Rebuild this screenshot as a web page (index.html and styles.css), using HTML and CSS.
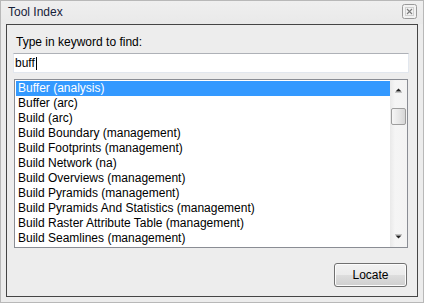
FILE: index.html
```html
<!DOCTYPE html>
<html>
<head>
<meta charset="utf-8">
<title>Tool Index</title>
<link rel="stylesheet" href="styles.css">
</head>
<body>
<div class="window">
  <div class="titlebar">
    <span class="title">Tool Index</span>
    <span class="close">
      <svg width="15" height="15" viewBox="0 0 15 15">
        <rect x="0.5" y="0.5" width="14" height="14" rx="2" fill="#f2f2f2" stroke="#9a9a9a"/>
        <rect x="3.5" y="3.5" width="8" height="8" fill="none" stroke="#d0d0d0"/>
        <path d="M5 5 L10 10 M10 5 L5 10" stroke="#7c7c7c" stroke-width="1.1"/>
      </svg>
    </span>
  </div>
  <div class="panel">
    <div class="prompt">Type in keyword to find:</div>
    <div class="input"><span class="value">buff</span><span class="caret"></span></div>
    <div class="listbox">
      <ul class="items">
        <li class="item selected">Buffer (analysis)</li>
        <li class="item">Buffer (arc)</li>
        <li class="item">Build (arc)</li>
        <li class="item">Build Boundary (management)</li>
        <li class="item">Build Footprints (management)</li>
        <li class="item">Build Network (na)</li>
        <li class="item">Build Overviews (management)</li>
        <li class="item">Build Pyramids (management)</li>
        <li class="item">Build Pyramids And Statistics (management)</li>
        <li class="item">Build Raster Attribute Table (management)</li>
        <li class="item">Build Seamlines (management)</li>
      </ul>
      <div class="scrollbar">
        <div class="arrow up">
          <svg width="17" height="17" viewBox="0 0 17 17"><path d="M5.5 11.5 L11.5 11.5 L8.5 8.5 Z" fill="#222"/><path d="M5 12.5 L12 12.5" stroke="#c4c4c4"/></svg>
        </div>
        <div class="track"><div class="thumb"></div></div>
        <div class="arrow down">
          <svg width="17" height="17" viewBox="0 0 17 17"><path d="M5.5 5.5 L11.5 5.5 L8.5 8.5 Z" fill="#222"/><path d="M5 4.5 L12 4.5" stroke="#c4c4c4"/></svg>
        </div>
      </div>
    </div>
    <div class="actions">
      <button class="locate">Locate</button>
    </div>
  </div>
</div>
</body>
</html>
```
FILE: styles.css
```css
html, body {
  margin: 0;
  padding: 0;
  background: #ececec;
}
.window {
  width: 424px;
  height: 303px;
  box-sizing: border-box;
  border: 1px solid #b8b8b8;
  background: #ececec;
  display: flex;
  flex-direction: column;
  font-family: "Liberation Sans", Arial, sans-serif;
  font-size: 12px;
  color: #000;
}
.titlebar {
  height: 23px;
  flex: none;
  display: flex;
  align-items: center;
  justify-content: space-between;
  padding: 0 6px 0 7px;
  background: linear-gradient(#efefef, #e9e9e9);
}
.title {
  line-height: 23px;
  color: #16213a;
}
.close {
  display: flex;
  margin-top: -2px;
}
.panel {
  flex: 1;
  margin: 0 5px 5px 5px;
  border: 1px solid #454545;
  background: #ededed;
  padding: 10px 9px 0 7px;
  display: flex;
  flex-direction: column;
}
.prompt {
  line-height: 15px;
  padding-left: 2px;
}
.input {
  margin: 3px -1px 0 -1px;
  height: 20px;
  box-sizing: border-box;
  background: #fff;
  border: 1px solid #e2e7ee;
  border-top-color: #aeb1b7;
  display: flex;
  align-items: center;
  padding-left: 1px;
}
.value {
  line-height: 15px;
  margin-top: 1px;
}
.caret {
  width: 1px;
  height: 13px;
  background: #000;
  margin-left: 1px;
  margin-top: 1px;
}
.listbox {
  margin-top: 6px;
  height: 169px;
  box-sizing: border-box;
  border: 1px solid #8a8d94;
  background: #fff;
  display: flex;
}
.items {
  list-style: none;
  margin: 0;
  padding: 1px 0 1px 1px;
  flex: 1;
  overflow: hidden;
}
.item {
  height: 15px;
  line-height: 15px;
  padding-left: 2px;
  white-space: nowrap;
}
.item.selected {
  background: #3399ff;
  color: #fff;
}
.scrollbar {
  width: 17px;
  flex: none;
  display: flex;
  flex-direction: column;
  background: linear-gradient(90deg, #e9e9e9, #f5f5f5 30%, #f3f3f3);
}
.arrow {
  height: 17px;
  display: flex;
}
.track {
  flex: 1;
  padding: 11px 1px 0 1px;
}
.thumb {
  height: 17px;
  box-sizing: border-box;
  border: 1px solid #9d9d9d;
  border-radius: 2px;
  background: linear-gradient(90deg, #f6f6f6, #e4e4e4 60%, #d6d6d6);
}
.actions {
  display: flex;
  justify-content: flex-end;
  padding-right: 1px;
  margin-top: 15px;
}
.locate {
  width: 73px;
  height: 24px;
  box-sizing: border-box;
  border: 1px solid #707070;
  border-radius: 3px;
  background: linear-gradient(#f2f2f2, #ebebeb 50%, #dddddd 51%, #cfcfcf);
  font-family: "Liberation Sans", Arial, sans-serif;
  font-size: 12px;
  color: #000;
  padding: 0;
  box-shadow: inset 0 0 0 1px #fcfcfc;
}
```
